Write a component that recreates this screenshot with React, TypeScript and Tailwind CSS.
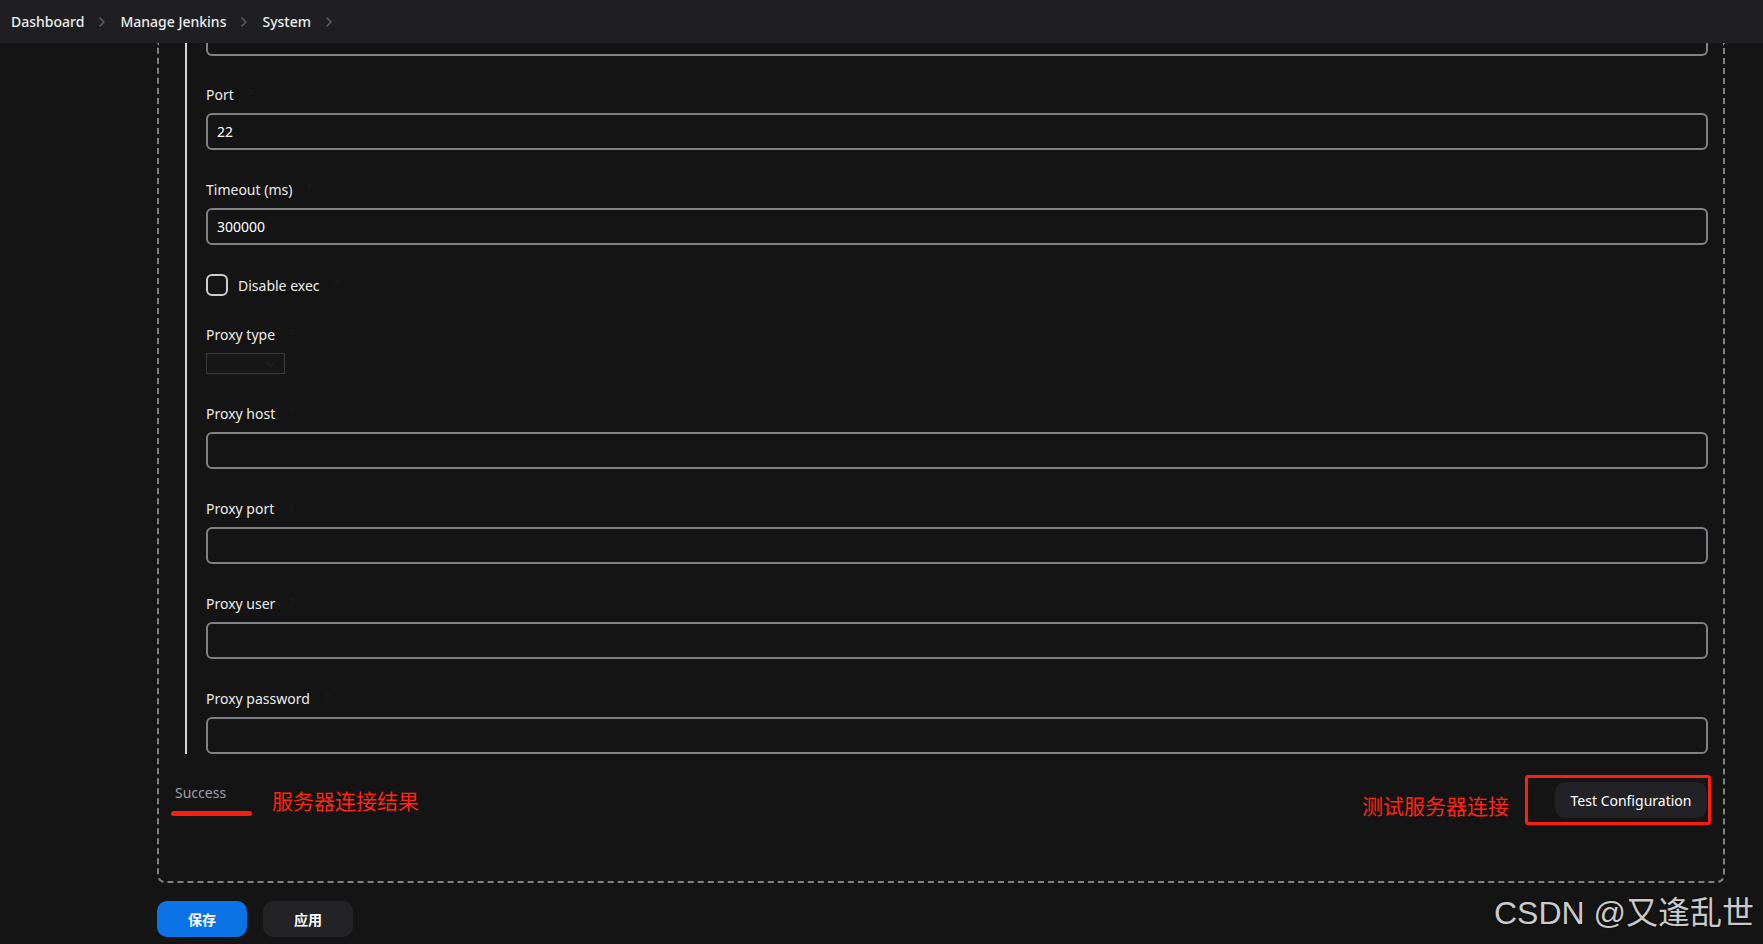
import React from 'react';

const font = "font-['Noto_Sans','Noto_Sans_CJK_SC',sans-serif]";

const Chevron = () => (
  <svg width="8" height="12" viewBox="0 0 8 12" fill="none" className="mx-[14px]">
    <path d="M2 2l4 4-4 4" stroke="#5f6065" strokeWidth="1.4" strokeLinecap="round" strokeLinejoin="round" />
  </svg>
);

const Help = () => <span className="ml-[14px] text-[12px] text-[#191922] font-bold">?</span>;

const Label: React.FC<{ text: string }> = ({ text }) => (
  <div className="flex items-center h-[20px] text-[14px] text-[#ececec]">
    {text}
    <Help />
  </div>
);

const TextField: React.FC<{ label: string; value?: string; first?: boolean }> = ({ label, value, first }) => (
  <div className={first ? 'mt-[28px]' : 'mt-[29px]'}>
    <Label text={label} />
    <div className="mt-[9px] h-[37px] rounded-[6px] border-2 border-[#7e8186] bg-[#141414] flex items-center px-[9px] text-[14px] text-white">
      {value}
    </div>
  </div>
);

export default function App() {
  return (
    <div className={`min-h-screen bg-[#141414] ${font} relative overflow-hidden`}>
      {/* breadcrumb bar */}
      <div className="h-[43px] bg-[#1f1f21] flex items-center pl-[11px] text-[14px] font-medium text-[#ececec]">
        <span>Dashboard</span>
        <Chevron />
        <span>Manage Jenkins</span>
        <Chevron />
        <span>System</span>
        <Chevron />
      </div>

      {/* config block (scrolled, top edge hidden under header) */}
      <div className="ml-[157px] w-[1568px] border-2 border-t-0 border-dashed border-[#7e8185] rounded-b-[8px] pb-[56px]">
        <div className="pl-[26px] pr-[15px]">
          <div className="border-l-2 border-[#d3d7db] pl-[19px]">
            <div className="h-[13px] border-2 border-t-0 border-[#7e8186] rounded-b-[6px]" />
            <TextField label="Port" value="22" first />
            <TextField label="Timeout (ms)" value="300000" />

            <div className="mt-[29px] flex items-center h-[22px]">
              <div className="w-[22px] h-[22px] rounded-[6px] border-2 border-[#c9ced3]" />
              <span className="ml-[10px] text-[14px] text-[#ececec]">Disable exec</span>
              <Help />
            </div>

            <div className="mt-[28px]">
              <Label text="Proxy type" />
              <div className="mt-[9px] w-[79px] h-[21px] border border-[#3a3a3c] bg-[#161616] flex items-center justify-end pr-[8px]">
                <svg width="10" height="6" viewBox="0 0 10 6" fill="none">
                  <path d="M1 1l4 4 4-4" stroke="#20202e" strokeWidth="1.5" />
                </svg>
              </div>
            </div>

            <TextField label="Proxy host" />
            <TextField label="Proxy port" />
            <TextField label="Proxy user" />
            <TextField label="Proxy password" />
          </div>
        </div>

        {/* result + test button, with red annotations */}
        <div className="mt-[21px] flex items-start justify-between pl-[16px] pr-[12px]">
          <div className="flex items-start">
            <div className="relative mt-[9px] text-[14px] leading-[18px] text-[#9c9eab]">
              Success
              <span className="absolute left-[-4px] top-[27px] w-[81px] h-[5px] rounded-full bg-[#ff1b10]" />
            </div>
            <span className="ml-[46px] mt-[12px] text-[21px] leading-[28px] text-[#ff2416]">服务器连接结果</span>
          </div>
          <div className="flex items-start">
            <span className="mt-[17px] text-[21px] leading-[28px] text-[#ff2416]">测试服务器连接</span>
            <div className="ml-[16px] h-[50px] border-[3px] border-[#ff1e12] rounded-[3px] pl-[27px] pr-[1px] flex items-center">
              <button className="w-[152px] h-[36px] rounded-[10px] bg-[#222226] text-[14px] text-white">
                Test Configuration
              </button>
            </div>
          </div>
        </div>
      </div>

      {/* bottom action buttons */}
      <div className="ml-[157px] mt-[18px] flex gap-[16px]">
        <button className="w-[90px] h-[36px] rounded-[10px] bg-[#0b73e6] text-[14px] font-semibold text-white">保存</button>
        <button className="w-[90px] h-[36px] rounded-[10px] bg-[#232326] text-[14px] font-semibold text-white">应用</button>
      </div>

      {/* watermark */}
      <div className="absolute right-[9px] top-[895px] text-[32px] leading-[36px] text-[#cacaca] font-['Liberation_Sans','Noto_Sans_CJK_SC',sans-serif] [text-shadow:0_0_2px_#000]">
        CSDN @又逢乱世
      </div>
    </div>
  );
}
